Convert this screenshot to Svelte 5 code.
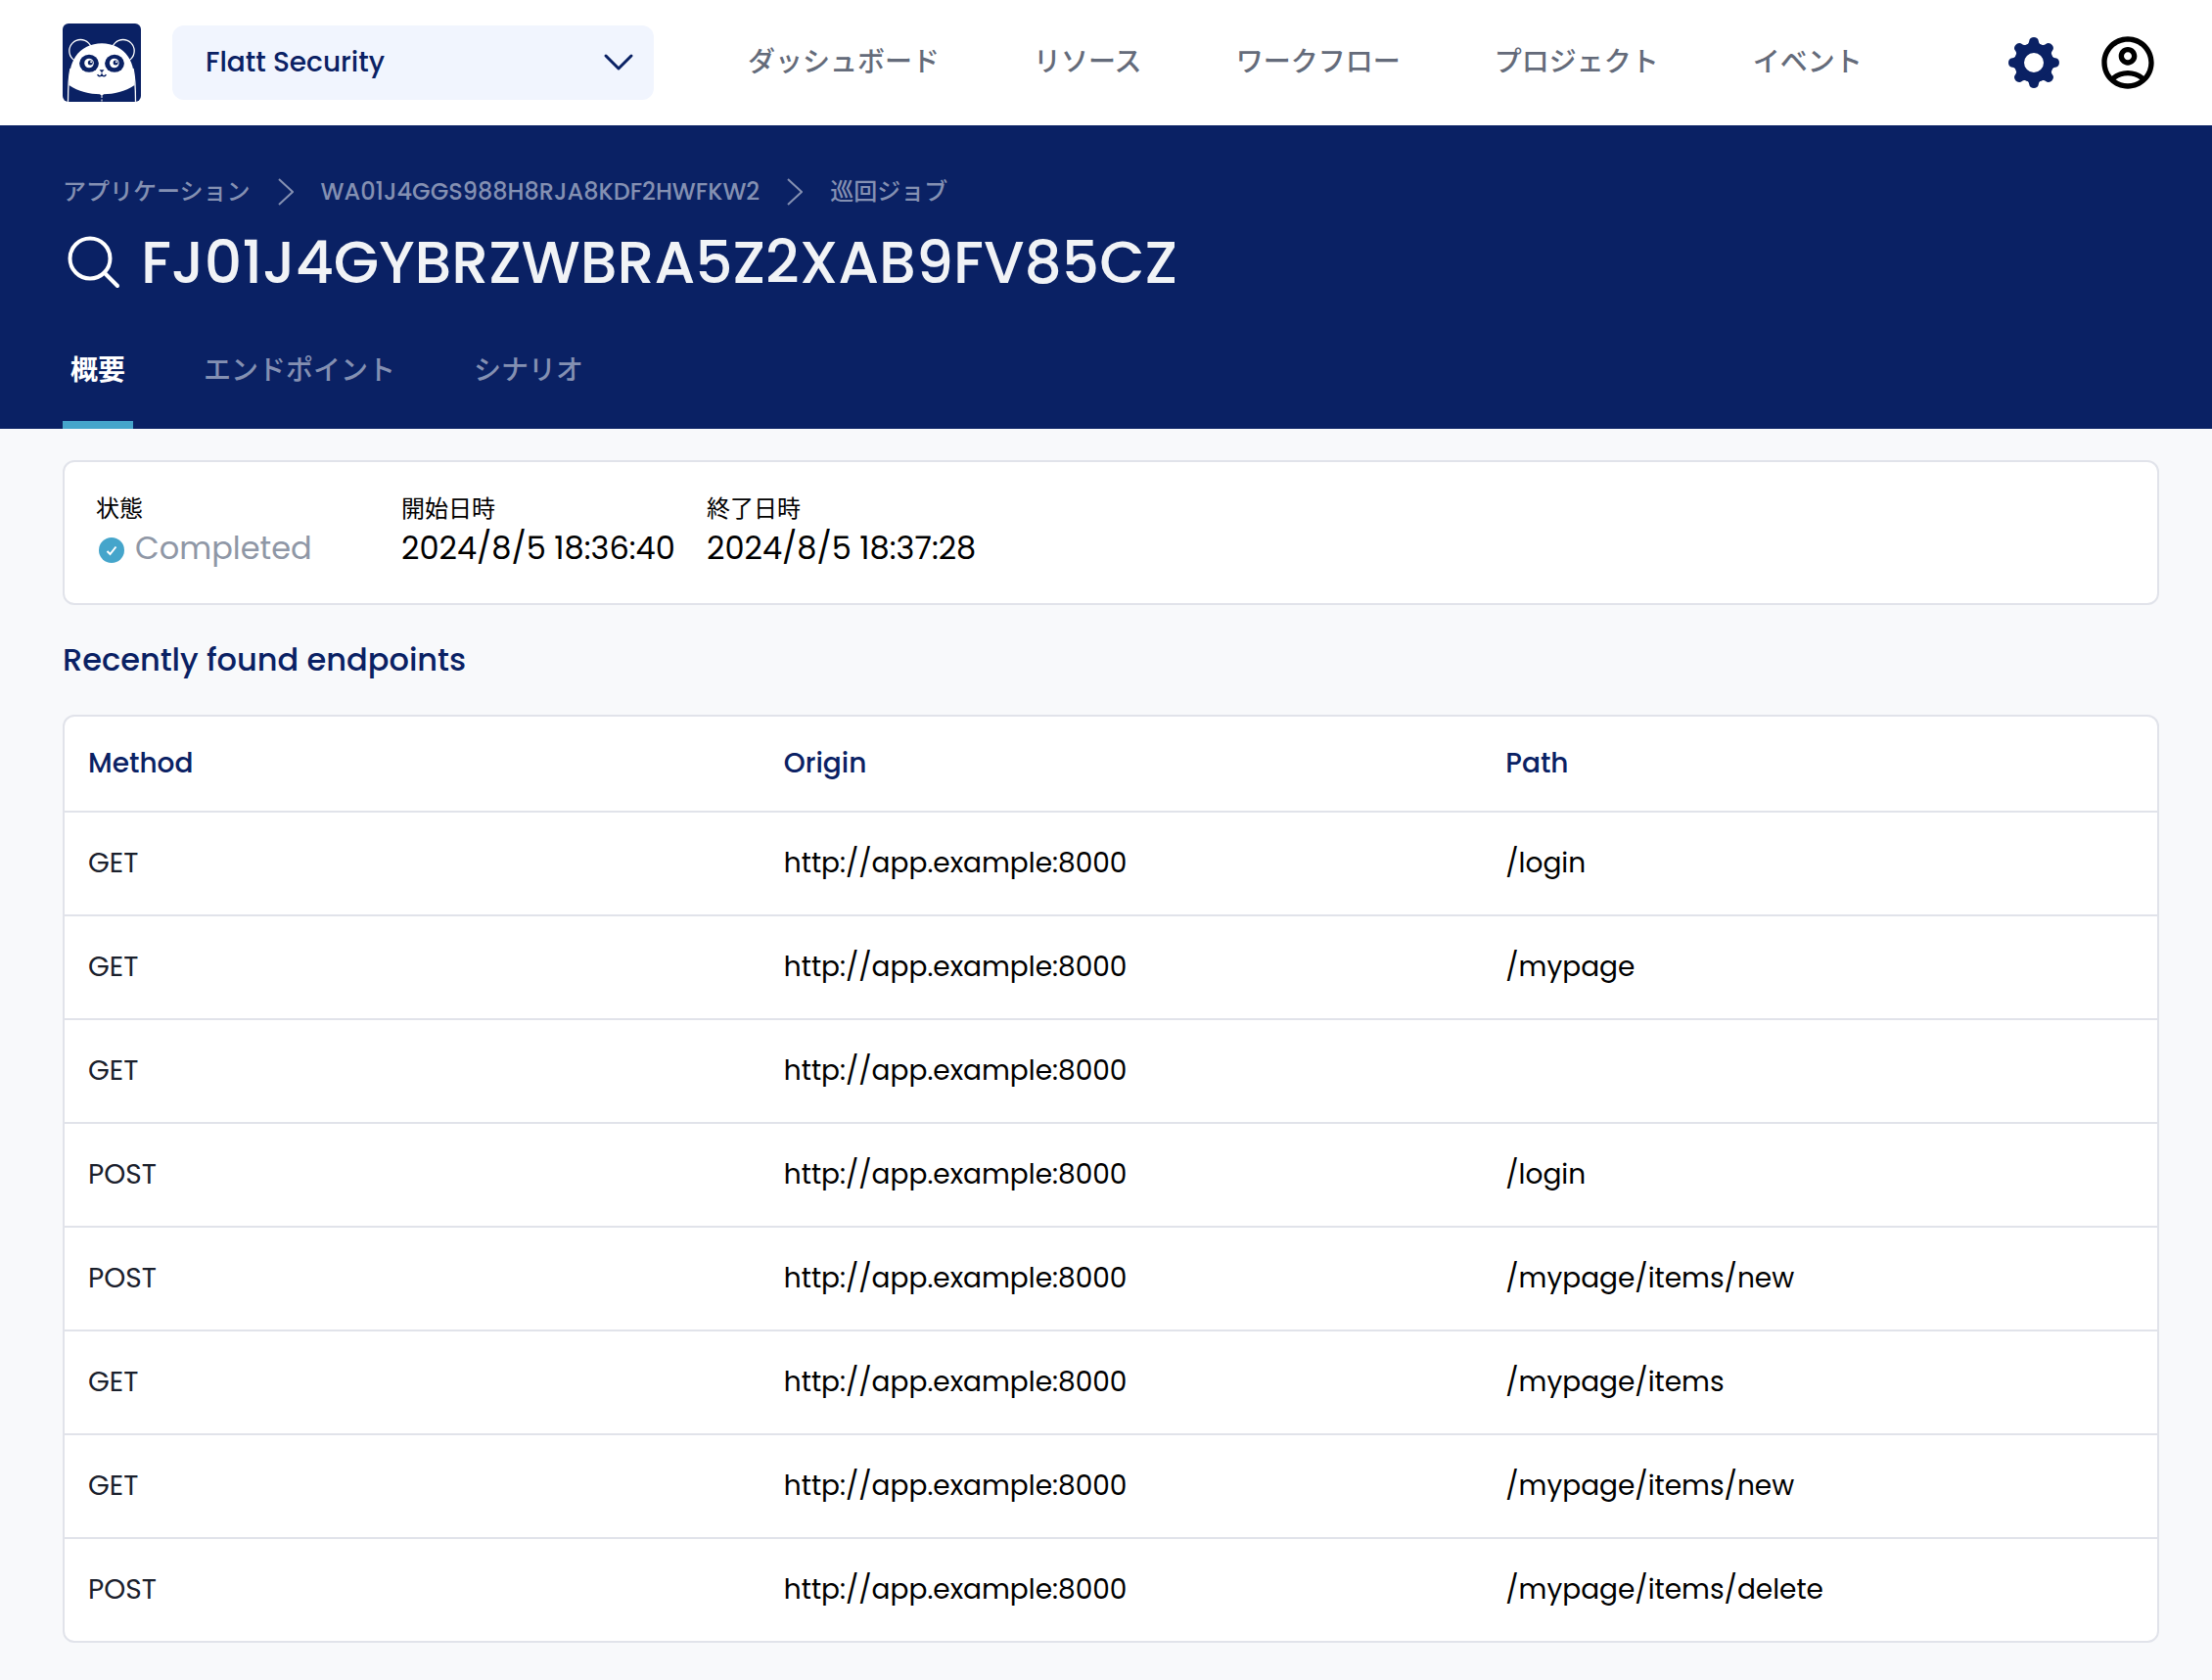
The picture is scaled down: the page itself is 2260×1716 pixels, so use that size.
<script lang="ts">
    interface Endpoint {
        method: string;
        origin: string;
        path: string;
    }

    const organizations = ['Flatt Security'];
    const navItems = ['ダッシュボード', 'リソース', 'ワークフロー', 'プロジェクト', 'イベント'];
    const breadcrumbs = ['アプリケーション', 'WA01J4GGS988H8RJA8KDF2HWFKW2', '巡回ジョブ'];
    const tabs = ['概要', 'エンドポイント', 'シナリオ'];
    const toothAngles = [0, 45, 90, 135, 180, 225, 270, 315];

    const origin = 'http://app.example:8000';
    const endpoints: Endpoint[] = [
        { method: 'GET', origin, path: '/login' },
        { method: 'GET', origin, path: '/mypage' },
        { method: 'GET', origin, path: '' },
        { method: 'POST', origin, path: '/login' },
        { method: 'POST', origin, path: '/mypage/items/new' },
        { method: 'GET', origin, path: '/mypage/items' },
        { method: 'GET', origin, path: '/mypage/items/new' },
        { method: 'POST', origin, path: '/mypage/items/delete' }
    ];

    let organization = $state(organizations[0]);
    let activeTab = $state(tabs[0]);
</script>

<header class="topbar">
    <a class="logo" href="#home" aria-label="Home">
        <svg viewBox="0 0 80 80">
            <defs>
                <clipPath id="logo-clip"><rect width="80" height="80" rx="6" /></clipPath>
            </defs>
            <g clip-path="url(#logo-clip)">
                <rect width="80" height="80" fill="#0a2164" />
                <circle cx="18.3" cy="28" r="11.5" fill="#0a2164" stroke="#fff" stroke-width="1.3" />
                <circle cx="61.7" cy="28" r="11.5" fill="#0a2164" stroke="#fff" stroke-width="1.3" />
                <path
                    d="M6.500 63C6.500 50 8 42 13 34C19 25 29 20.300 40 20.300S61 25 67 34C72 42 73.500 50 73.500 63C64 69.500 52 72 42 72.300L40 74L38 72.300C28 72 16 69.500 6.500 63Z"
                    fill="#fff"
                />
                <path
                    d="M5.500 80C5.500 67 6 55 8 46M74.500 80C74.500 67 74 55 72 46"
                    fill="none"
                    stroke="#fff"
                    stroke-width="1.300"
                />
                <path d="M40 74V80" stroke="#fff" stroke-width="1" stroke-dasharray="2 1.500" />
                <ellipse cx="27" cy="40.800" rx="9.900" ry="9" fill="#0a2164" />
                <ellipse cx="53" cy="40.800" rx="9.900" ry="9" fill="#0a2164" />
                <circle cx="27" cy="40.500" r="4.800" fill="#fff" />
                <circle cx="52.800" cy="40.500" r="4.800" fill="#fff" />
                <circle cx="28.300" cy="40" r="2.500" fill="#0a2164" />
                <circle cx="54.100" cy="40" r="2.500" fill="#0a2164" />
                <circle cx="29.100" cy="39.300" r="1" fill="#fff" />
                <circle cx="54.900" cy="39.300" r="1" fill="#fff" />
                <path d="M37.500 47.200H42.500L40 50.200Z" fill="#0a2164" />
                <path
                    d="M35.700 52C36.300 54.300 39.300 54.300 40 52C40.700 54.300 43.700 54.300 44.300 52"
                    fill="none"
                    stroke="#0a2164"
                    stroke-width="1.300"
                />
            </g>
        </svg>
    </a>

    <div class="org-select">
        <select aria-label="Organization" bind:value={organization}>
            {#each organizations as org}
                <option value={org}>{org}</option>
            {/each}
        </select>
        <svg class="org-chevron" viewBox="0 0 32 20" aria-hidden="true">
            <path d="M3 3L16 16L29 3" />
        </svg>
    </div>

    <nav class="main-nav">
        {#each navItems as item}
            <a href="#nav">{item}</a>
        {/each}
    </nav>

    <div class="actions">
        <button type="button" class="icon-button settings" aria-label="Settings">
            <svg viewBox="-32 -32 64 64">
                <circle r="15" fill="none" stroke="currentColor" stroke-width="10" />
                {#each toothAngles as angle}
                    <path
                        d="M-8 -17C-6 -19 -5 -20 -4.800 -22C-4.500 -27.300 4.500 -27.300 4.800 -22C5 -20 6 -19 8 -17Z"
                        fill="currentColor"
                        transform="rotate({angle})"
                    />
                {/each}
            </svg>
        </button>
        <button type="button" class="icon-button" aria-label="Account">
            <svg viewBox="0 0 24 24" fill="currentColor">
                <path
                    d="M12 2C6.480 2 2 6.480 2 12s4.480 10 10 10 10-4.480 10-10S17.520 2 12 2zM7.350 18.500C8.660 17.560 10.260 17 12 17s3.340.56 4.650 1.500C15.340 19.440 13.740 20 12 20s-3.340-.56-4.650-1.500zm10.790-1.380C16.450 15.800 14.320 15 12 15s-4.450.8-6.140 2.120C4.700 15.730 4 13.950 4 12c0-4.420 3.580-8 8-8s8 3.580 8 8c0 1.950-.7 3.730-1.860 5.120zM12 6c-1.930 0-3.500 1.570-3.500 3.500S10.070 13 12 13s3.500-1.570 3.500-3.500S13.930 6 12 6zm0 5c-.83 0-1.500-.67-1.500-1.500S11.170 8 12 8s1.500.67 1.500 1.500S12.830 11 12 11z"
                />
            </svg>
        </button>
    </div>
</header>

<section class="banner">
    <nav class="breadcrumbs" aria-label="Breadcrumb">
        {#each breadcrumbs as crumb, i}
            {#if i > 0}
                <svg viewBox="0 0 16 28" aria-hidden="true">
                    <path d="M1 1L15 14L1 27" />
                </svg>
            {/if}
            <a href="#crumb">{crumb}</a>
        {/each}
    </nav>

    <div class="title-row">
        <svg viewBox="0 0 64 64" aria-hidden="true">
            <circle cx="28" cy="28" r="20.500" />
            <path d="M42.500 42.500L56 56" />
        </svg>
        <h1>FJ01J4GYBRZWBRA5Z2XAB9FV85CZ</h1>
    </div>

    <div class="tabs" role="tablist">
        {#each tabs as tab}
            <button
                type="button"
                role="tab"
                class="tab"
                class:active={tab === activeTab}
                aria-selected={tab === activeTab}
                onclick={() => (activeTab = tab)}
            >
                {tab}
            </button>
        {/each}
    </div>
</section>

<main>
    <dl class="summary">
        <div>
            <dt>状態</dt>
            <dd class="status">
                <svg viewBox="0 0 26 26" aria-hidden="true">
                    <circle cx="13" cy="13" r="13" fill="#45a5cb" />
                    <path d="M8.500 14L11.500 17L17.500 9.500" fill="none" stroke="#fff" stroke-width="2" />
                </svg>
                Completed
            </dd>
        </div>
        <div>
            <dt>開始日時</dt>
            <dd>2024/8/5 18:36:40</dd>
        </div>
        <div>
            <dt>終了日時</dt>
            <dd>2024/8/5 18:37:28</dd>
        </div>
    </dl>

    <h2>Recently found endpoints</h2>

    <table>
        <thead>
            <tr>
                <th scope="col" class="col-method">Method</th>
                <th scope="col" class="col-origin">Origin</th>
                <th scope="col">Path</th>
            </tr>
        </thead>
        <tbody>
            {#each endpoints as endpoint}
                <tr>
                    <td class="method">{endpoint.method}</td>
                    <td>{endpoint.origin}</td>
                    <td>{endpoint.path}</td>
                </tr>
            {/each}
        </tbody>
    </table>
</main>

<style>
    :global(body) {
        margin: 0;
        background: #f8f9fb;
        color: #000;
        font-family: Poppins, Inter, 'Noto Sans CJK JP', sans-serif;
        font-size: 28px;
        line-height: 42px;
    }

    a {
        color: inherit;
        text-decoration: none;
    }

    button {
        padding: 0;
        border: 0;
        background: none;
        font: inherit;
        cursor: pointer;
    }

    svg {
        display: block;
        flex: none;
    }

    .topbar {
        display: flex;
        align-items: center;
        height: 128px;
        padding: 0 54px 0 64px;
        background: #fff;
    }

    .logo {
        width: 80px;
        height: 80px;
        margin-right: 32px;
    }

    .org-select {
        display: grid;
        align-items: center;
        width: 492px;
    }

    .org-select select {
        grid-area: 1 / 1;
        height: 76px;
        padding: 0 72px 0 34px;
        border: 0;
        border-radius: 12px;
        background: #f1f5fe;
        color: #0a2164;
        font: inherit;
        font-weight: 500;
        appearance: none;
    }

    .org-chevron {
        grid-area: 1 / 1;
        justify-self: end;
        width: 32px;
        margin-right: 20px;
        fill: none;
        stroke: #0a2164;
        stroke-width: 3;
        stroke-linecap: round;
        stroke-linejoin: round;
        pointer-events: none;
    }

    .main-nav {
        display: flex;
        gap: 96px;
        margin-left: 96px;
        color: #646b7a;
        font-weight: 500;
        white-space: nowrap;
    }

    .actions {
        display: flex;
        gap: 32px;
        margin-left: auto;
    }

    .icon-button {
        width: 64px;
        height: 64px;
        color: #000;
    }

    .settings {
        color: #0a2164;
    }

    .banner {
        padding: 50px 54px 0 64px;
        background: #0a2164;
    }

    .breadcrumbs {
        display: flex;
        align-items: center;
        gap: 28px;
        color: #8490b2;
        font-size: 24px;
        font-weight: 500;
        line-height: 36px;
    }

    .breadcrumbs svg {
        width: 16px;
        fill: none;
        stroke: #8490b2;
        stroke-width: 2;
    }

    .title-row {
        display: flex;
        align-items: center;
        gap: 16px;
        margin-top: 18px;
    }

    .title-row svg {
        width: 64px;
        fill: none;
        stroke: #fff;
        stroke-width: 4;
        stroke-linecap: round;
    }

    h1 {
        margin: 0;
        color: #f1f3f6;
        font-size: 60px;
        font-weight: 500;
        line-height: 72px;
    }

    .tabs {
        display: flex;
        gap: 64px;
        margin-top: 54px;
    }

    .tab {
        padding: 0 8px 30px;
        border-bottom: 8px solid transparent;
        color: #8490b2;
        font-weight: 500;
    }

    .tab.active {
        border-color: #45a5cb;
        color: #fff;
        font-weight: 700;
    }

    main {
        padding: 32px 54px 38px 64px;
    }

    .summary {
        display: flex;
        gap: 32px;
        margin: 0;
        padding: 30px 32px 34px;
        border: 2px solid #e1e3ea;
        border-radius: 12px;
        background: #fff;
    }

    .summary div {
        width: 280px;
    }

    dt {
        font-size: 24px;
        line-height: 36px;
    }

    dd {
        margin: 0;
        font-size: 32px;
        line-height: 44px;
        white-space: nowrap;
    }

    .status {
        display: flex;
        align-items: center;
        gap: 11px;
        color: #8f97a6;
    }

    .status svg {
        width: 26px;
        margin: 4px 0 0 3px;
    }

    h2 {
        margin: 32px 0;
        color: #0a2164;
        font-size: 32px;
        font-weight: 500;
        line-height: 48px;
    }

    table {
        width: 100%;
        table-layout: fixed;
        border: 2px solid #e1e3ea;
        border-radius: 12px;
        border-spacing: 0;
        background: #fff;
    }

    th,
    td {
        padding: 31px 24px;
        text-align: left;
    }

    th {
        padding: 27px 24px;
        color: #0a2164;
        font-weight: 500;
    }

    td {
        height: 42px;
        border-top: 2px solid #e1e3ea;
    }

    .method {
        color: #1a202c;
    }

    .col-method {
        width: 31%;
    }

    .col-origin {
        width: 32.25%;
    }
</style>
